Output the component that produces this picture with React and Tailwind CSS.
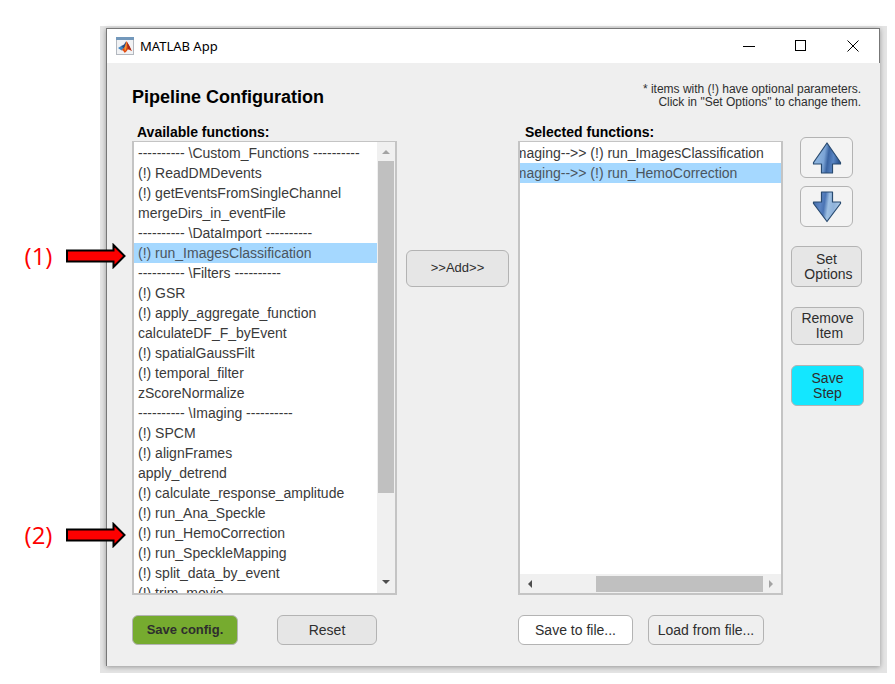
import React from "react";

const AVAILABLE = [
  "---------- \\Custom_Functions ----------",
  "(!) ReadDMDevents",
  "(!) getEventsFromSingleChannel",
  "mergeDirs_in_eventFile",
  "---------- \\DataImport ----------",
  "(!) run_ImagesClassification",
  "---------- \\Filters ----------",
  "(!) GSR",
  "(!) apply_aggregate_function",
  "calculateDF_F_byEvent",
  "(!) spatialGaussFilt",
  "(!) temporal_filter",
  "zScoreNormalize",
  "---------- \\Imaging ----------",
  "(!) SPCM",
  "(!) alignFrames",
  "apply_detrend",
  "(!) calculate_response_amplitude",
  "(!) run_Ana_Speckle",
  "(!) run_HemoCorrection",
  "(!) run_SpeckleMapping",
  "(!) split_data_by_event",
  "(!) trim_movie",
];

const SELECTED = [
  "Imaging-->> (!) run_ImagesClassification",
  "Imaging-->> (!) run_HemoCorrection",
];

const BUTTON = "rounded-md border border-[#b3b3b3] text-center text-[#2e2e2e]";

function MatlabLogo() {
  return (
    <svg className="h-[18px] w-[18px] shrink-0" viewBox="0 0 18 18" aria-hidden="true">
      <rect x="0.5" y="0.5" width="17" height="17" fill="#f1f2f4" stroke="#b3b8bf" />
      <rect x="0" y="0" width="18" height="3" fill="#7398bb" />
      <path d="M2 11 L6 8.500 L8.500 10.500 L5.500 13.500 Z" fill="#3d86c4" />
      <path d="M5.500 9 L8 7.500 L10 4.500 L10 9 L8 12 Z" fill="#294f86" />
      <path d="M10.500 4 L8.500 10.500 L5.500 13 Q7.500 13 8.500 15.800 Q10.500 15 11.800 12.500 Q13.500 12 15.800 14 Q13 8 10.500 4 Z" fill="#df4a12" />
      <path d="M10.400 4.500 Q9.800 8 8.300 11 L9 14.500 Q11.500 10 10.400 4.500 Z" fill="#f59a35" />
      <path d="M11 5 L11.800 12 Q13.500 12 15.800 14 Q13.500 8.500 11 5 Z" fill="#a5291c" />
    </svg>
  );
}

function MoveArrow({ down }) {
  const id = down ? "fill-down" : "fill-up";
  return (
    <svg className="h-8 w-[30px]" viewBox="0 0 30 32" aria-hidden="true">
      <defs>
        <linearGradient id={id} x1="0" y1="0" x2="1" y2="0.15">
          <stop offset="0" stopColor={down ? "#3f66a3" : "#93b9e0"} />
          <stop offset="0.3" stopColor={down ? "#5d86c4" : "#86aedb"} />
          <stop offset="0.45" stopColor={down ? "#4a74b4" : "#7ba4d6"} />
          <stop offset="0.6" stopColor={down ? "#9dbfe2" : "#3a64a2"} />
          <stop offset="0.8" stopColor={down ? "#8fb2da" : "#5a86c4"} />
          <stop offset="1" stopColor={down ? "#a9c8e6" : "#305a98"} />
        </linearGradient>
      </defs>
      <path
        d={
          down
            ? "M9.500 1 H20.500 V11 H28.500 V12.500 L15 30.500 L1.500 12.500 V11 H9.500 Z"
            : "M9.500 31 H20.500 V22 H28.500 V20.500 L15 1 L1.500 20.500 V22 H9.500 Z"
        }
        fill={`url(#${id})`}
        stroke="#284a70"
        strokeWidth="1.2"
        strokeLinejoin="round"
      />
    </svg>
  );
}

function Triangle({ points, className }) {
  return (
    <svg className="h-2 w-2" viewBox="0 0 8 8" aria-hidden="true">
      <polygon points={points} className={className} />
    </svg>
  );
}

function Row({ text, selected }) {
  return (
    <li
      role="option"
      aria-selected={selected}
      className={
        selected
          ? "h-5 bg-[#a5d8ff] px-1 leading-5 text-[#4a5560]"
          : "h-5 px-1 leading-5 text-[#3a3a3a]"
      }
    >
      {text}
    </li>
  );
}

function Callout({ label }) {
  return (
    <div className="flex items-center gap-3">
      <span className="w-[31px] text-center font-['Open_Sans',sans-serif] text-2xl leading-6 text-[#fd0000]">
        {label}
      </span>
      <svg className="h-[26px] w-[60px]" viewBox="0 0 60 26" aria-hidden="true">
        <path
          d="M1 7.500 H47.500 V2 L58.500 13 L47.500 24 V18.500 H1 Z"
          fill="#fd0000"
          stroke="#000"
          strokeWidth="2"
        />
      </svg>
    </div>
  );
}

export default function App() {
  return (
    <div className="relative bg-white pt-[26px] pr-2 pb-[11px] pl-[100px] font-['Liberation_Sans',Arial,sans-serif] text-sm">
      <div className="bg-[#e4e4e4] pt-0.5 pr-[7px] pb-[7px] pl-1.5">
        <main className="border-t border-l border-[#777] bg-[#efefef] shadow-[0_1px_5px_rgba(0,0,0,0.35)]">
          <header className="flex h-[34px] items-center border-r border-[#777] bg-white pl-[9px]">
            <MatlabLogo />
            <span className="ml-1.5 flex-1 font-['Noto_Sans',sans-serif] text-[13px] text-black">
              MATLAB App
            </span>
            <div className="flex items-center gap-10 pr-5 text-black">
              <button type="button" aria-label="Minimize" className="h-3 w-3">
                <svg viewBox="0 0 12 12" className="h-3 w-3"><path d="M0 6.500 H12" stroke="currentColor" fill="none" /></svg>
              </button>
              <button type="button" aria-label="Maximize" className="h-3 w-3">
                <svg viewBox="0 0 12 12" className="h-3 w-3"><rect x="0.5" y="0.5" width="10" height="10" stroke="currentColor" fill="none" /></svg>
              </button>
              <button type="button" aria-label="Close" className="h-3 w-3">
                <svg viewBox="0 0 12 12" className="h-3 w-3"><path d="M0.500 0.500 L11.500 11.500 M11.500 0.500 L0.500 11.500" stroke="currentColor" fill="none" /></svg>
              </button>
            </div>
          </header>

          <div className="pt-5 pr-4 pb-[21px] pl-[25px]">
            <div className="flex items-start justify-between pr-[3px]">
              <h1 className="pt-1 text-lg leading-5 font-bold text-black">Pipeline Configuration</h1>
              <p className="text-right text-xs leading-[13px] text-[#2e2e2e]">
                * items with (!) have optional parameters.
                <br />
                Click in &quot;Set Options&quot; to change them.
              </p>
            </div>

            <div className="mt-3.5 flex">
              <section className="min-w-0 flex-1">
                <h2 id="available" className="h-[18px] pl-[5px] leading-[18px] font-bold text-black">
                  Available functions:
                </h2>
                <div className="flex h-[454px] border-2 border-t border-[#c4c4c4] bg-white">
                  <ul role="listbox" aria-labelledby="available" className="min-w-0 flex-1 overflow-hidden pt-px whitespace-nowrap">
                    {AVAILABLE.map((t) => (
                      <Row key={t} text={t} selected={t === "(!) run_ImagesClassification"} />
                    ))}
                  </ul>
                  <div className="flex w-[18px] flex-col items-center bg-[#f0f0f0]">
                    <div className="flex h-[19px] items-center">
                      <Triangle points="0,6 4,2 8,6" className="fill-[#a3a3a3]" />
                    </div>
                    <div className="h-[332px] w-4 bg-[#c0c0c0]" />
                    <div className="flex-1" />
                    <div className="flex h-[22px] items-center">
                      <Triangle points="0,2 4,6 8,2" className="fill-[#4d4d4d]" />
                    </div>
                  </div>
                </div>
                <div className="mt-5 flex justify-between pr-5">
                  <button type="button" className={`${BUTTON} h-[30px] w-[106px] bg-[#76ab2f] text-[13px] font-bold`}>
                    Save config.
                  </button>
                  <button type="button" className={`${BUTTON} h-[30px] w-[100px] bg-[#e6e6e6]`}>Reset</button>
                </div>
              </section>

              <div className="flex w-[121px] justify-center pt-[127px]">
                <button type="button" className={`${BUTTON} h-[37px] w-[103px] bg-[#e6e6e6] text-[13px]`}>
                  &gt;&gt;Add&gt;&gt;
                </button>
              </div>

              <section className="min-w-0 flex-1">
                <h2 id="selected" className="h-[18px] pl-[7px] leading-[18px] font-bold text-black">
                  Selected functions:
                </h2>
                <div className="flex h-[454px] flex-col border-2 border-t border-[#c4c4c4] bg-white">
                  <div className="flex flex-1 justify-end overflow-hidden pt-px">
                    <ul role="listbox" aria-labelledby="selected" className="w-[105%] shrink-0 whitespace-nowrap">
                      {SELECTED.map((t) => (
                        <Row key={t} text={t} selected={t.endsWith("run_HemoCorrection")} />
                      ))}
                    </ul>
                  </div>
                  <div className="flex h-[19px] items-center justify-between bg-[#f0f0f0] px-1.5">
                    <Triangle points="6,0 2,4 6,8" className="fill-[#4d4d4d]" />
                    <div className="mr-1 ml-auto h-4 w-[167px] bg-[#c0c0c0]" />
                    <Triangle points="2,0 6,4 2,8" className="fill-[#a3a3a3]" />
                  </div>
                </div>
                <div className="mt-5 flex gap-[15px]">
                  <button type="button" className={`${BUTTON} h-[30px] w-[115px] bg-white`}>Save to file...</button>
                  <button type="button" className={`${BUTTON} h-[30px] w-[116px] bg-[#efefef]`}>Load from file...</button>
                </div>
              </section>

              <div className="ml-2 flex w-[73px] flex-col pt-3.5 leading-[15px]">
                <button type="button" aria-label="Move up" className={`${BUTTON} ml-[9px] flex h-[41px] w-[53px] items-center justify-center bg-[#f3f3f3]`}>
                  <MoveArrow />
                </button>
                <button type="button" aria-label="Move down" className={`${BUTTON} mt-2 ml-[9px] flex h-[41px] w-[53px] items-center justify-center bg-[#f3f3f3]`}>
                  <MoveArrow down />
                </button>
                <button type="button" className={`${BUTTON} mt-[19px] h-[41px] w-[71px] bg-[#e6e6e6]`}>
                  Set
                  <br />
                  &nbsp;Options
                </button>
                <button type="button" className={`${BUTTON} mt-5 h-[38px] w-[73px] bg-[#e6e6e6]`}>
                  Remove
                  <br />
                  &nbsp;Item
                </button>
                <button type="button" className={`${BUTTON} mt-5 h-[41px] w-[73px] bg-[#13e7ff]`}>
                  Save
                  <br />
                  Step
                </button>
              </div>
            </div>
          </div>
        </main>
      </div>

      {/* Step markers drawn over the left edge of the window */}
      <div className="absolute top-[243px] left-[23px]">
        <Callout label="(1)" />
      </div>
      <div className="absolute top-[522px] left-[23px]">
        <Callout label="(2)" />
      </div>
    </div>
  );
}
